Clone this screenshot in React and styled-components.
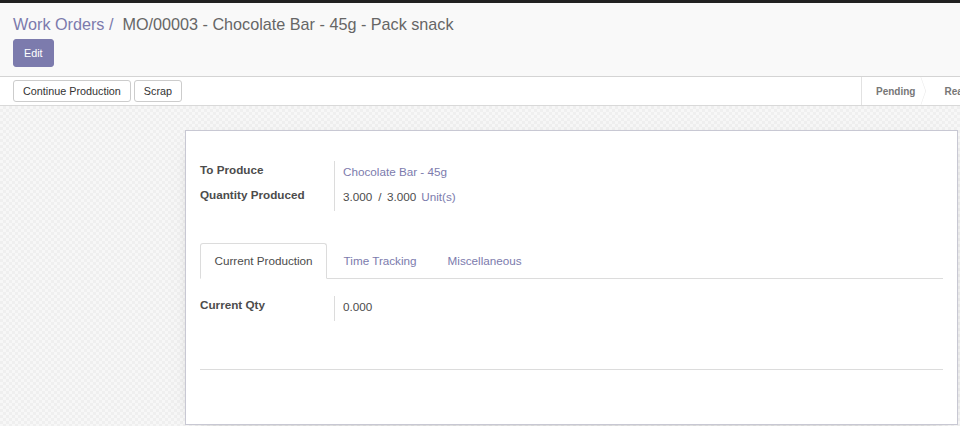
import React from "react";
import styled, { createGlobalStyle } from "styled-components";

const GlobalStyle = createGlobalStyle`
  html, body {
    margin: 0;
    height: 100%;
    overflow: hidden;
  }
  body {
    font-family: "Liberation Sans", Arial, sans-serif;
    color: #4c4c4c;
    background: #fff;
  }
  #root {
    height: 100%;
  }
`;

const Page = styled.div`
  display: flex;
  flex-direction: column;
  height: 100%;
`;

const TopStrip = styled.div`
  height: 3px;
  background: #212121;
  flex-shrink: 0;
`;

const ControlPanel = styled.div`
  background: #f9f9f9;
  border-bottom: 1px solid #d4d4d4;
  padding: 8.5px 13px 9px;
  flex-shrink: 0;
`;

const Breadcrumb = styled.div`
  font-size: 16.2px;
  line-height: 24.3px;
  white-space: nowrap;
  display: flex;
`;

const CrumbLink = styled.span`
  color: #7c7bad;
`;

const CrumbSep = styled.span`
  color: #7c7bad;
  margin: 0 9px 0 4.5px;
`;

const CrumbActive = styled.span`
  color: #666;
`;

const Button = styled.button`
  font-family: inherit;
  font-size: 10.8px;
  height: ${({ $tall }) => ($tall ? "28px" : "22px")};
  padding: 0 ${({ $tall }) => ($tall ? "10px" : "9px")};
  border-radius: 3px;
  border: 1px solid ${({ $primary }) => ($primary ? "#7c7bad" : "#ccc")};
  background: ${({ $primary }) => ($primary ? "#7c7bad" : "#fff")};
  color: ${({ $primary }) => ($primary ? "#fff" : "#333")};
  cursor: pointer;
  white-space: nowrap;
`;

const EditRow = styled.div`
  margin-top: 3.2px;
  display: flex;
`;

const StatusBar = styled.div`
  display: flex;
  align-items: stretch;
  height: 28px;
  background: #fff;
  border-bottom: 1px solid #d9d9d9;
  flex-shrink: 0;
`;

const ActionButtons = styled.div`
  flex: 1;
  display: flex;
  align-items: center;
  gap: 3px;
  padding-left: 13px;
`;

const StatusList = styled.div`
  flex: 0 0 98px;
  display: flex;
  overflow: hidden;
  white-space: nowrap;
  border-left: 1px solid #e2e2e2;
`;

const StatusStep = styled.div`
  position: relative;
  display: flex;
  align-items: center;
  flex-shrink: 0;
  padding: 1px 15px 0 14px;
  font-size: 10px;
  font-weight: bold;
  color: #777;

  &::after {
    content: "";
    position: absolute;
    right: -1px;
    top: 50%;
    width: 19px;
    height: 19px;
    border-top: 1px solid #e6e6e6;
    border-right: 1px solid #e6e6e6;
    transform: translateY(-50%) scaleX(0.35) rotate(45deg);
    transform-origin: center;
  }
`;

const SheetBg = styled.div`
  flex: 1;
  min-height: 0;
  padding: 24px 2px 0 185px;
  background-color: #f4f4f4;
  background-image: conic-gradient(
    #efefef 25%,
    #f7f7f7 0 50%,
    #efefef 0 75%,
    #f7f7f7 0
  );
  background-size: 6px 6px;
`;

const Sheet = styled.div`
  background: #fff;
  border: 1px solid #c8c8d3;
  box-shadow: 0 5px 20px -15px rgba(0, 0, 0, 0.6);
  padding: 30px 14px 54px;
`;

const Group = styled.div`
  display: flex;
  padding-bottom: ${({ $tail }) => $tail}px;
`;

const LabelCol = styled.div`
  width: 134px;
  border-right: 1px solid #dcdcdc;
  flex-shrink: 0;
`;

const ValueCol = styled.div`
  padding-left: 8px;
`;

const Row = styled.div`
  height: 25px;
  font-size: 11.7px;
  line-height: 17px;
`;

const Label = styled(Row)`
  font-weight: bold;
  color: #4c4c4c;
`;

const Value = styled(Row)`
  padding-top: 1.8px;
  box-sizing: border-box;
  color: ${({ $link }) => ($link ? "#7c7bad" : "#4c4c4c")};
  display: flex;
`;

const Slash = styled.span`
  margin: 0 5.5px 0 6px;
`;

const Unit = styled.span`
  color: #7c7bad;
  margin-left: 5px;
`;

const Notebook = styled.div`
  margin-top: 28px;
`;

const TabNav = styled.div`
  display: flex;
  border-bottom: 1px solid #dcdcdc;
`;

const Tab = styled.div`
  font-size: 11.7px;
  line-height: 17.5px;
  padding: 8px 13.5px 8.5px;
  margin: 0 2px ${({ $active }) => ($active ? "-1px" : "0")} 0;
  border: 1px solid ${({ $active }) => ($active ? "#dcdcdc" : "transparent")};
  border-bottom: ${({ $active }) => ($active ? "1px solid #fff" : "0")};
  border-radius: 3px 3px 0 0;
  background: ${({ $active }) => ($active ? "#fff" : "transparent")};
  color: ${({ $active }) => ($active ? "#4c4c4c" : "#7c7bad")};
  white-space: nowrap;
`;

const TabPane = styled.div`
  padding-top: 17.5px;
`;

const Separator = styled.hr`
  border: 0;
  border-top: 1px solid #dcdcdc;
  margin: 40.5px 0 0;
`;

export default function App() {
  const steps = ["Pending", "Ready"];
  return (
    <Page>
      <GlobalStyle />
      <TopStrip />
      <ControlPanel>
        <Breadcrumb>
          <CrumbLink>Work Orders</CrumbLink>
          <CrumbSep>/</CrumbSep>
          <CrumbActive>MO/00003 - Chocolate Bar - 45g - Pack snack</CrumbActive>
        </Breadcrumb>
        <EditRow>
          <Button $primary $tall>
            Edit
          </Button>
        </EditRow>
      </ControlPanel>
      <StatusBar>
        <ActionButtons>
          <Button>Continue Production</Button>
          <Button>Scrap</Button>
        </ActionButtons>
        <StatusList>
          {steps.map((s) => (
            <StatusStep key={s}>{s}</StatusStep>
          ))}
        </StatusList>
      </StatusBar>
      <SheetBg>
        <Sheet>
          <Group $tail={4}>
            <LabelCol>
              <Label>To Produce</Label>
              <Label>Quantity Produced</Label>
            </LabelCol>
            <ValueCol>
              <Value $link>Chocolate Bar - 45g</Value>
              <Value>
                <span>3.000</span>
                <Slash>/</Slash>
                <span>3.000</span>
                <Unit>Unit(s)</Unit>
              </Value>
            </ValueCol>
          </Group>
          <Notebook>
            <TabNav>
              <Tab $active>Current Production</Tab>
              <Tab>Time Tracking</Tab>
              <Tab>Miscellaneous</Tab>
            </TabNav>
            <TabPane>
              <Group $tail={7}>
                <LabelCol>
                  <Label>Current Qty</Label>
                </LabelCol>
                <ValueCol>
                  <Value>0.000</Value>
                </ValueCol>
              </Group>
              <Separator />
            </TabPane>
          </Notebook>
        </Sheet>
      </SheetBg>
    </Page>
  );
}
